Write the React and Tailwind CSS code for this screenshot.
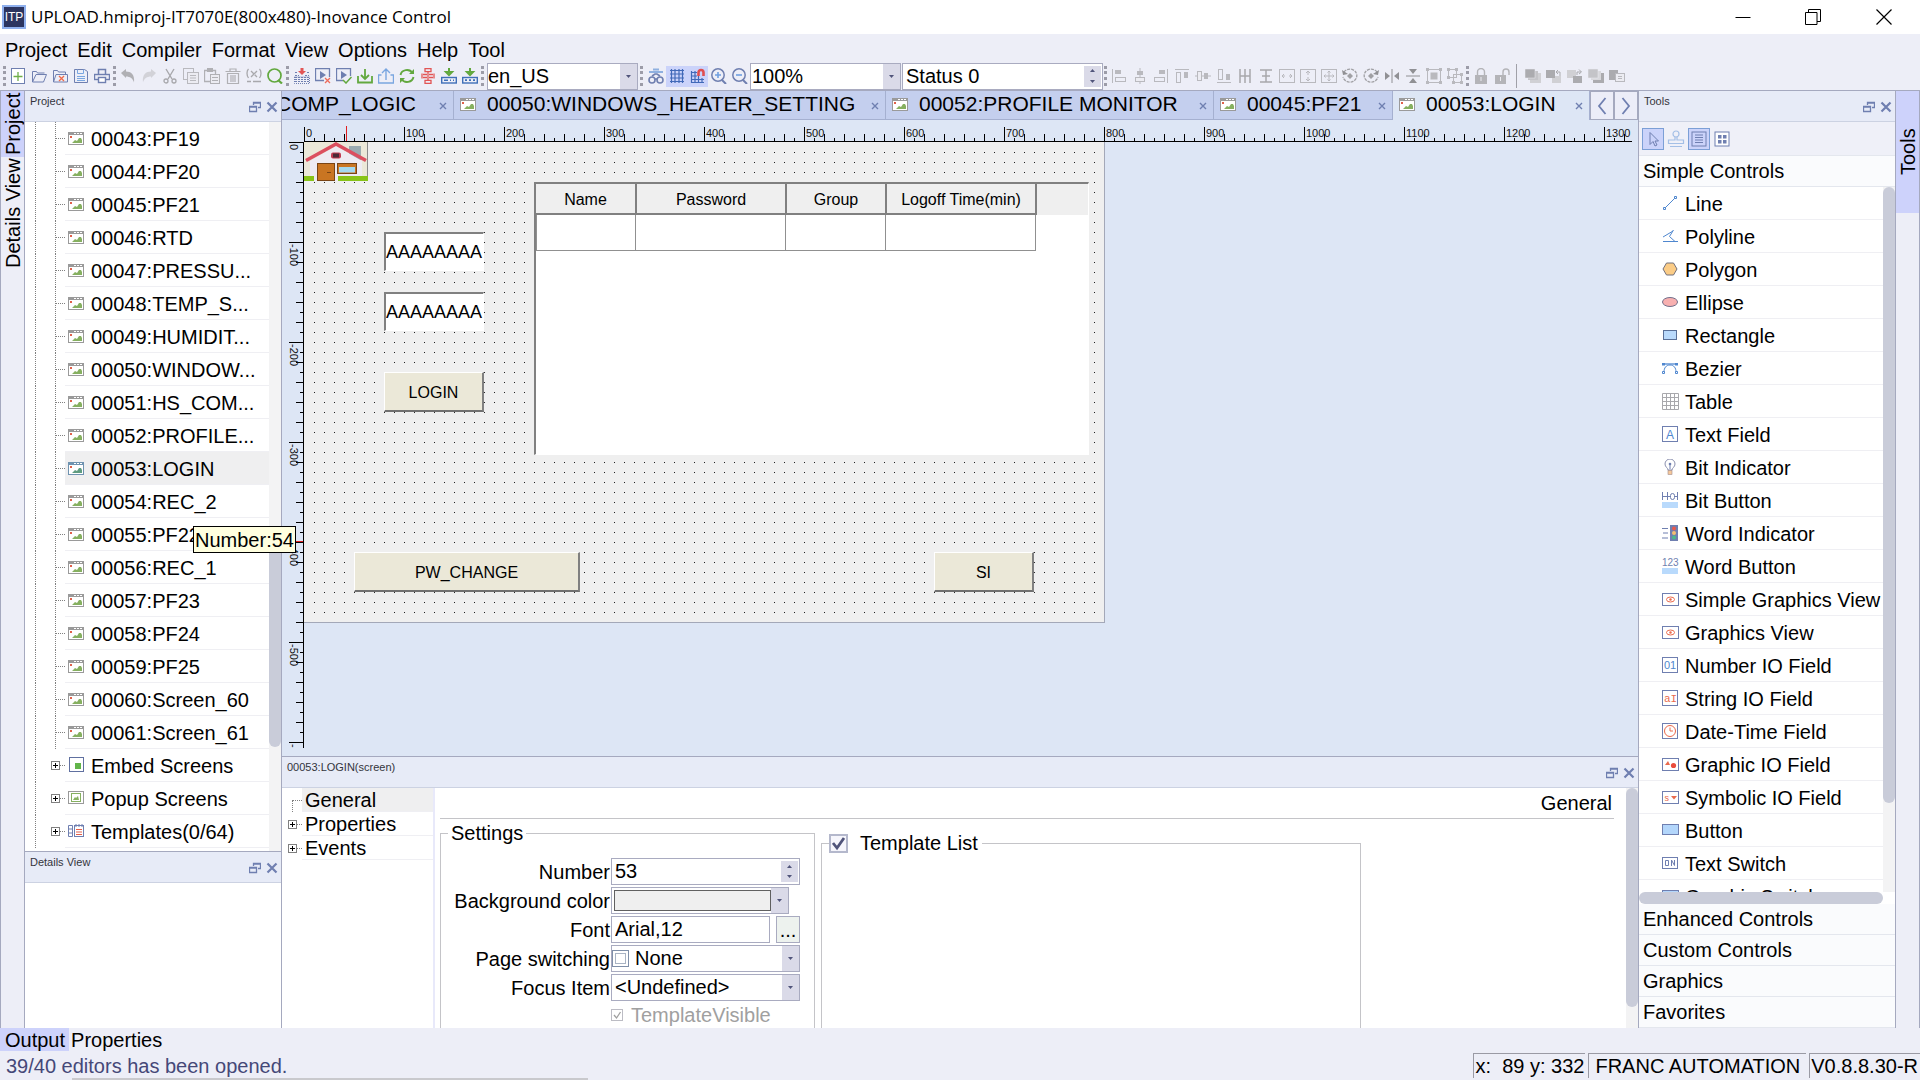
import React from "react";

/* ---------- icon helpers ---------- */

function Ico({ children, w = 16, h = 16, className = "" }) {
  return (
    <svg width={w} height={h} viewBox={`0 0 ${w} ${h}`} fill="none" className={`shrink-0 ${className}`} aria-hidden="true">
      {children}
    </svg>
  );
}

const P = "#6f7fb0";
const G = "#b9b9be";

const ScreenIcon = ({ active }) => (
  <Ico w={16} h={13}>
    <rect x="0.5" y="0.5" width="15" height="12" fill="#fff" stroke={active ? "#6f93b0" : "#9a9a9a"} />
    <rect x="0" y="0" width="16" height="3" fill={active ? "#6f93b0" : "#9a9a9a"} />
    <path d="M6 1.5h2M9 1.5h2M12 1.5h2" stroke="#fff" />
    <rect x="2" y="4" width="2" height="2" fill="#e0604a" />
    <path d="M4 11l3-3 2 1 2-3h2l1 2v3z" fill={active ? "#5f9c80" : "#86b060"} />
  </Ico>
);

const EmbedIcon = () => (
  <Ico w={16} h={16}>
    <rect x="1.5" y="0.5" width="14" height="14" fill="#fff" stroke="#6070a0" />
    <rect x="7" y="6" width="6" height="6" fill="#62b54a" />
  </Ico>
);
const PopupIcon = () => (
  <Ico w={16} h={14}>
    <rect x="0.5" y="0.5" width="15" height="12" stroke="#9a9a9a" />
    <rect x="3.5" y="2.5" width="9" height="8" stroke="#86b060" />
    <path d="M5 9l2-3 1 1 2-2 1 4z" fill="#86b060" />
  </Ico>
);
const TemplatesIcon = () => (
  <Ico w={16} h={14}>
    <path d="M0.500 1.500h4v11h-4zM0.500 5h4M0.500 9h4" stroke={P} />
    <rect x="6.500" y="1.500" width="9" height="11" stroke={P} />
    <path d="M8 0v3M11 0v3M14 0v3" stroke={P} />
    <path d="M8 5.500h6M8 8h6M8 10.500h6" stroke="#e5604a" strokeWidth="1.200" />
  </Ico>
);

/* ---------- main toolbar icons ---------- */

const fileIcons = [
  ["New", <Ico key="i"><rect x="1.5" y="0.5" width="13" height="15" fill="#fff" stroke={P} /><path d="M8 4v9M3.500 8.500h9" stroke="#6fae4a" strokeWidth="1.300" /></Ico>],
  ["Open", <Ico key="i"><path d="M1.500 14V3.500h4l1 1.500h7M1.500 14L5 6.500h10.500L12.500 14z" stroke={P} /></Ico>],
  ["Close", <Ico key="i"><path d="M1.500 14V2.500h4l1 1.500h7v2M1.500 14L4 6.500h11.500V14z" stroke={P} /><path d="M7 8l5 5M12 8l-5 5" stroke="#ee6a4a" strokeWidth="1.300" /></Ico>],
  ["Save", <Ico key="i"><path d="M1.500 1.500h10l3 2v11h-13z" stroke={P} /><path d="M4.500 1.500v4h6v-4M4 8.500h8M4 10.500h8M4 12.500h8" stroke="#7aa6e0" /></Ico>],
  ["Print", <Ico key="i"><path d="M4.500 6V1.500h7V6" stroke={P} strokeWidth="1.500" /><rect x="0.500" y="6.500" width="15" height="5" stroke={P} strokeWidth="1.400" /><rect x="4.500" y="9.500" width="7" height="5" fill="#fff" stroke={P} strokeWidth="1.400" /></Ico>],
];
const editIcons = [
  ["Undo", <Ico key="i"><path d="M1 5l5-4v2.500c5 0 9 3 8 11-1-4-4-6-8-6V10z" fill="#b0b0b4" /></Ico>],
  ["Redo", <Ico key="i"><path d="M15 5l-5-4v2.500c-5 0-9 3-8 11 1-4 4-6 8-6V10z" fill="#d2d2d8" /></Ico>],
  ["Cut", <Ico key="i"><path d="M4 1l6 10M12 1L6 11" stroke="#a8a8ac" strokeWidth="1.400" /><circle cx="4" cy="13" r="2" stroke="#a8a8ac" strokeWidth="1.300" /><circle cx="12" cy="13" r="2" stroke="#a8a8ac" strokeWidth="1.300" /></Ico>],
  ["Copy", <Ico key="i"><rect x="0.500" y="0.500" width="10" height="11" stroke={G} /><rect x="4.500" y="4.500" width="11" height="11" fill="#ececf2" stroke={G} /><path d="M7 7.500h6M7 10h6M7 12.500h6" stroke={G} /></Ico>],
  ["Paste", <Ico key="i"><path d="M0.500 2.500h11v11h-11z" stroke="#b0b0b4" strokeWidth="1.300" /><rect x="3" y="0" width="6" height="4" fill="#b0b0b4" /><rect x="6.500" y="6.500" width="9" height="9" fill="#ececf2" stroke="#b0b0b4" /><path d="M8 9.500h6M8 12.500h6" stroke="#b0b0b4" /></Ico>],
  ["Delete", <Ico key="i"><path d="M0.500 3.500h15M5 3V1h6v2M2.500 5.500h11v10h-11zM6 7v7M8 7v7M10 7v7" stroke="#b0b0b4" strokeWidth="1.200" /></Ico>],
  ["Variable", <Ico key="i"><path d="M2.500 1C.5 3 .5 7 2.500 10M13.500 1c2 2 2 6 0 9M5 3l6 6M11 3L5 9M1 13.500h4M7 13.500h8" stroke="#a8a8ac" strokeWidth="1.300" /></Ico>],
  ["Find", <Ico key="i"><circle cx="7.500" cy="7.500" r="6.500" stroke="#62a83e" strokeWidth="1.700" /><path d="M11 12l4 3.500" stroke="#62a83e" strokeWidth="2.200" /></Ico>],
];
const buildIcons = [
  ["Compile", <Ico key="i"><path d="M8 0v3" stroke="#e25555" strokeWidth="3" /><path d="M4 3h8L8 7z" fill="#e25555" /><path d="M1 4.500h2M13 4.500h2M1 7.500h4M11 7.500h4M1 9.500h14M1 11.500h14M1 13.500h14" stroke={P} strokeDasharray="2 1" /><rect x="0.500" y="9" width="15" height="6.500" stroke={P} strokeDasharray="1 1" /></Ico>],
  ["Stop simulation", <Ico key="i"><path d="M9 12.500H0.500v-12h14V9" stroke={P} strokeWidth="1.300" /><path d="M5 3l6 4-6 4z" fill={P} /><path d="M10 10l5 5M15 10l-5 5" stroke="#ee6a5a" strokeWidth="1.300" /></Ico>],
  ["Start simulation", <Ico key="i"><path d="M7 12.500H0.500v-12h14V8" stroke={P} strokeWidth="1.300" /><path d="M5 3l6 4-6 4z" fill={P} /><path d="M7 12l3 3 5.500-6" stroke="#62a83e" strokeWidth="1.500" /></Ico>],
  ["Download", <Ico key="i"><path d="M1 8v6.500h14V8M8 1v9M4 7l4 4 4-4" stroke="#62a83e" strokeWidth="1.800" /></Ico>],
  ["Upload", <Ico key="i"><path d="M3.500 7H0.500v8h15V7h-3M8 12V2M4 5l4-4 4 4" stroke="#7aa6e0" strokeWidth="1.400" /></Ico>],
  ["Refresh", <Ico key="i"><path d="M1.500 7a6.500 6 0 0 1 12-2M14.500 9a6.500 6 0 0 1-12 2" stroke="#62a83e" strokeWidth="1.900" /><path d="M15 1v5h-5zM1 15v-5h5z" fill="#62a83e" /></Ico>],
  ["Disconnect", <Ico key="i"><path d="M5 0.700h6v3H5zM3 6.500h4M9 6.500h4M3 9.500h4M9 9.500h4M5 12.300h6v3H5zM8 4v8M2 5.500v5M14 5.500v5" stroke="#e25555" strokeWidth="1.300" /></Ico>],
  ["Download to device", <Ico key="i"><path d="M8 0v5M5 4l3 3 3-3z" stroke="#62a83e" strokeWidth="2" /><rect x="0.700" y="9.500" width="14.600" height="5.500" stroke="#3f6fb8" strokeWidth="1.400" /><path d="M3 12.200h4M9 12.200h1M12 12.200h1" stroke="#3f6fb8" strokeWidth="1.400" /></Ico>],
  ["Download data", <Ico key="i"><path d="M8 0v5M5 4l3 3 3-3z" stroke="#62a83e" strokeWidth="2" /><rect x="0.700" y="9.500" width="14.600" height="5.500" stroke="#3f6fb8" strokeWidth="1.400" /><path d="M3 12.200h2M7 12.200h2M11 12.200h2" stroke="#3f6fb8" strokeWidth="1.800" /></Ico>],
];
const viewIcons = [
  ["Cross reference", <Ico key="i"><path d="M1 4h14M5 1.500h6" stroke="#8fb0e0" strokeWidth="2" /><circle cx="4" cy="12" r="3" stroke={P} strokeWidth="1.600" /><circle cx="12" cy="12" r="3" stroke={P} strokeWidth="1.600" /><path d="M4 8l3-2h2l3 2M7 11h2" stroke={P} strokeWidth="1.600" /></Ico>, false],
  ["Show grid", <Ico key="i"><path d="M2.500 1v14M6 1v14M10 1v14M13.500 1v14M1 2.500h14M1 6h14M1 10h14M1 13.500h14" stroke="#4169b8" strokeWidth="1.200" /></Ico>, true],
  ["Snap to grid", <Ico key="i"><path d="M1.500 3v12M5 3v12M8.500 8v7M12 10v5M1 4.500h6M1 8h6M1 11.500h13M1 14.500h13" stroke="#4169b8" strokeWidth="1.200" /><path d="M8.500 8V4.500a2.500 2.500 0 0 1 5 0V8" stroke="#e04f50" strokeWidth="2.600" /></Ico>, true],
  ["Zoom in", <Ico key="i"><circle cx="7" cy="7" r="6.200" stroke={P} strokeWidth="1.500" /><path d="M11 12l4 4" stroke={P} strokeWidth="2" /><path d="M4 7h6M7 4v6" stroke="#6f9fe0" strokeWidth="1.600" /></Ico>, false],
  ["Zoom out", <Ico key="i"><circle cx="7" cy="7" r="6.200" stroke={P} strokeWidth="1.500" /><path d="M11 12l4 4" stroke={P} strokeWidth="2" /><path d="M4 7h6" stroke="#6f9fe0" strokeWidth="1.600" /></Ico>, false],
];
const alignIcons = [
  ["Align left", <Ico key="i"><path d="M1.500 1v14" stroke={G} /><rect x="4" y="2" width="6" height="4" fill={G} /><rect x="4.500" y="9.500" width="10" height="4" stroke={G} /></Ico>],
  ["Align center", <Ico key="i"><path d="M8 0v16" stroke={G} /><rect x="5" y="3" width="6" height="4" fill={G} /><rect x="3.500" y="9.500" width="9" height="4" fill="#ececf2" stroke={G} /></Ico>],
  ["Align right", <Ico key="i"><path d="M14.500 1v14" stroke={G} /><rect x="6" y="2" width="6" height="4" fill={G} /><rect x="1.500" y="9.500" width="10" height="4" stroke={G} /></Ico>],
  ["Align top", <Ico key="i"><path d="M1 1.500h14" stroke={G} /><rect x="10" y="4" width="4" height="6" fill={G} /><rect x="2.500" y="4.500" width="4" height="10" stroke={G} /></Ico>],
  ["Align middle", <Ico key="i"><path d="M0 8h16" stroke={G} /><rect x="9" y="5" width="4" height="6" fill={G} /><rect x="2.500" y="3.500" width="4" height="9" fill="#ececf2" stroke={G} /></Ico>],
  ["Align bottom", <Ico key="i"><path d="M1 14.500h14" stroke={G} /><rect x="10" y="6" width="4" height="6" fill={G} /><rect x="2.500" y="1.500" width="4" height="10" stroke={G} /></Ico>],
  ["Space horizontally", <Ico key="i"><path d="M3 1v14M8 1v14M13 1v14M3 8h10" stroke="#a8a8ac" strokeWidth="1.500" /></Ico>],
  ["Space vertically", <Ico key="i"><path d="M2 2h12M4 8h8M2 14h12M8 2v12" stroke="#a8a8ac" strokeWidth="1.500" /></Ico>],
  ["Same width", <Ico key="i"><rect x="0.500" y="1.500" width="15" height="13" stroke={G} /><path d="M3 8h3M10 8h3" stroke={G} /><path d="M5 6L3 8l2 2M11 6l2 2-2 2" stroke={G} /></Ico>],
  ["Same height", <Ico key="i"><rect x="0.500" y="1.500" width="15" height="13" stroke={G} /><path d="M8 4v3M8 9v3M6 5l2-2 2 2M6 11l2 2 2-2" stroke={G} /></Ico>],
  ["Same size", <Ico key="i"><rect x="0.500" y="1.500" width="15" height="13" stroke={G} /><path d="M8 3v10M3 8h10M6.500 4.500L8 3l1.500 1.500M6.500 11.500L8 13l1.500-1.500M4.500 6.500L3 8l1.500 1.500M11.500 6.500L13 8l-1.500 1.500" stroke={G} /></Ico>],
  ["Rotate left", <Ico key="i"><path d="M2 4a7 6.500 0 1 1-1 5" stroke="#a0a0a4" strokeDasharray="3 1" strokeWidth="1.300" /><path d="M0 2l1 5 5-1z" fill="#909094" /><path d="M8 5l3 3-3 3-3-3z" fill="#a0a0a4" /></Ico>],
  ["Rotate right", <Ico key="i"><path d="M14 4a7 6.500 0 1 0 1 5" stroke="#a0a0a4" strokeDasharray="3 1" strokeWidth="1.300" /><path d="M16 2l-1 5-5-1z" fill="#909094" /><path d="M8 5l3 3-3 3-3-3z" fill="#a0a0a4" /></Ico>],
  ["Flip horizontal", <Ico key="i"><path d="M8 1v14" stroke="#909094" /><path d="M1 4l5 4-5 4zM15 4l-5 4 5 4z" fill="#909094" /></Ico>],
  ["Flip vertical", <Ico key="i"><path d="M1 8h14" stroke="#909094" /><path d="M4 1l4 5 4-5zM4 15l4-5 4 5z" fill="#909094" /></Ico>],
  ["Group", <Ico key="i"><rect x="1.500" y="1.500" width="13" height="13" stroke={G} /><rect x="4.500" y="4.500" width="7" height="7" fill={G} /><path d="M0 0h3v3H0zM13 0h3v3h-3zM0 13h3v3H0zM13 13h3v3h-3z" fill={G} /></Ico>],
  ["Ungroup", <Ico key="i"><rect x="1.500" y="1.500" width="8" height="8" stroke={G} /><rect x="6.500" y="6.500" width="8" height="8" stroke={G} /><path d="M0 0h3v3H0zM8 0h3v3H8zM0 8h3v3H0zM13 5h3v3h-3zM5 13h3v3H5zM13 13h3v3h-3z" fill={G} /></Ico>],
];
const lockIcons = [
  ["Lock", <Ico key="i"><rect x="2" y="7" width="12" height="9" fill="#b4b4b8" /><path d="M4.500 7V4a3.500 3.500 0 0 1 7 0v3" stroke="#b4b4b8" strokeWidth="1.400" /><path d="M8 9v4" stroke="#ececf2" /></Ico>],
  ["Unlock", <Ico key="i"><rect x="1" y="7" width="11" height="9" fill="#b4b4b8" /><path d="M9 7V4a3 3 0 0 1 6 0v3" stroke="#b4b4b8" strokeWidth="1.400" /><path d="M6.500 9v4" stroke="#ececf2" /></Ico>],
];
const orderIcons = [
  ["Bring to front", <Ico key="i"><rect x="5" y="5" width="11" height="10" fill="#d0d0d4" /><rect x="3" y="3" width="10" height="9" fill="#c4c4c8" /><rect x="0" y="1" width="10" height="9" fill="#ababaf" stroke="#ececf2" strokeWidth="0.500" /></Ico>],
  ["Bring forward", <Ico key="i"><rect x="6" y="8" width="9" height="7" fill="#d0d0d4" /><rect x="0" y="2" width="9" height="8" fill="#ababaf" /><path d="M14 8V4h-4M12 2l-2 2 2 2" stroke="#ababaf" /></Ico>],
  ["Send backward", <Ico key="i"><rect x="0" y="2" width="9" height="8" fill="#d0d0d4" /><rect x="6" y="8" width="9" height="7" fill="#ababaf" /><path d="M10 7V4h4M12 1.500L14.500 4 12 6" stroke="#ababaf" /></Ico>],
  ["Send to back", <Ico key="i"><rect x="5" y="5" width="11" height="10" fill="#ababaf" /><rect x="3" y="3" width="10" height="9" fill="#d8d8dc" /><rect x="0" y="1" width="10" height="9" fill="#c4c4c8" stroke="#ececf2" strokeWidth="0.500" /></Ico>],
  ["Order", <Ico key="i"><rect x="0" y="2" width="9" height="10" fill="#ababaf" /><rect x="6.500" y="5.500" width="9" height="8" fill="#ececf2" stroke={G} /><path d="M9 8.500h4M9 10.500h4" stroke={G} /></Ico>],
];

/* ---------- toolbar parts ---------- */

const Grip = () => <span className="mx-px h-5 w-[3px] shrink-0 border-l-[3px] border-dotted border-[#9c9ca8]" />;

function IconRow({ items }) {
  return items.map(([name, icon, on]) => (
    <button key={name} aria-label={name} className={`flex h-[21px] w-[21px] shrink-0 items-center justify-center ${on ? "bg-[#cbd3fa]" : ""}`}>
      {icon}
    </button>
  ));
}

const DownArrow = () => (
  <span className="pointer-events-none absolute inset-y-0 right-0 flex w-[17px] items-center justify-center bg-[#dadae8]">
    <Ico w={5} h={3}><path d="M0 0h5L2.500 3z" fill="#50547a" /></Ico>
  </span>
);
const Spinner = () => (
  <span className="absolute inset-y-[2px] right-[1px] flex w-[17px] flex-col">
    <button aria-label="Increase" className="flex flex-1 items-center justify-center bg-[#dadae8]">
      <Ico w={5} h={3}><path d="M0 3h5L2.500 0z" fill="#50547a" /></Ico>
    </button>
    <button aria-label="Decrease" className="flex flex-1 items-center justify-center bg-[#dadae8]">
      <Ico w={5} h={3}><path d="M0 0h5L2.500 3z" fill="#50547a" /></Ico>
    </button>
  </span>
);

function Select({ label, id, value, className = "", pad = "pl-0" }) {
  return (
    <span className={`relative flex h-[27px] shrink-0 border border-[#a9abc0] bg-white ${className}`}>
      <select id={id} aria-label={label} defaultValue={value} className={`h-full w-full appearance-none bg-transparent pr-5 leading-[25px] outline-none ${pad}`}>
        <option>{value}</option>
      </select>
      <DownArrow />
    </span>
  );
}

/* ---------- dock header ---------- */

function DockHeader({ title }) {
  return (
    <header className="flex h-[31px] shrink-0 justify-between border-b border-[#ccd2e2] bg-[#e7ebf7] pt-1 pr-[3px] pl-[5px]">
      <h2 className="text-[11px] leading-[12px] text-[#33343c]">{title}</h2>
      <div className="flex gap-[5px] pt-[6px]">
        <button aria-label={`Float ${title}`} className="flex h-3 w-3">
          <Ico w={12} h={12}><path d="M4.500 4V1.500h7v5H9M4.500 2h7" stroke={P} strokeWidth="1.300" /><path d="M0.500 5.500h7v5h-7zM0.500 6h7" stroke={P} strokeWidth="1.300" /></Ico>
        </button>
        <button aria-label={`Close ${title}`} className="flex h-3 w-3">
          <Ico w={12} h={12}><path d="M1.500 1.500l9 9M10.500 1.500l-9 9" stroke={P} strokeWidth="2.200" /></Ico>
        </button>
      </div>
    </header>
  );
}

/* ---------- project tree ---------- */

const screens = [
  "00043:PF19", "00044:PF20", "00045:PF21", "00046:RTD", "00047:PRESSU...", "00048:TEMP_S...",
  "00049:HUMIDIT...", "00050:WINDOW...", "00051:HS_COM...", "00052:PROFILE...", "00053:LOGIN",
  "00054:REC_2", "00055:PF22", "00056:REC_1", "00057:PF23", "00058:PF24", "00059:PF25",
  "00060:Screen_60", "00061:Screen_61",
];
const folders = [
  ["Embed Screens", <EmbedIcon key="i" />],
  ["Popup Screens", <PopupIcon key="i" />],
  ["Templates(0/64)", <TemplatesIcon key="i" />],
];

const Expander = () => (
  <button aria-label="Expand" className="flex h-[9px] w-[9px] shrink-0 items-center justify-center border border-[#808080] bg-white">
    <Ico w={5} h={5}><path d="M2.500 0v5M0 2.500h5" stroke="#000" /></Ico>
  </button>
);

function TreeRow({ label, icon, expandable, selected }) {
  return (
    <li className="flex h-[33px] items-stretch">
      <span className="ml-[10px] w-4 shrink-0 border-l border-dotted border-[#808080]" />
      <span className="flex w-[14px] shrink-0 items-center">
        {expandable ? <Expander /> : <span className="ml-1 h-full w-px border-l border-dotted border-[#808080]" />}
        <span className="grow border-t border-dotted border-[#808080]" />
      </span>
      <button className={`flex flex-1 items-center gap-[7px] border-b border-[#efeff3] pl-[3px] text-left whitespace-nowrap ${selected ? "bg-[#efeff0]" : "bg-white"}`}>
        {icon}
        <span className="pt-[2px]">{label}</span>
      </button>
    </li>
  );
}

function ProjectPanel() {
  return (
    <aside className="relative flex w-[258px] shrink-0 flex-col border-r border-l border-[#a5a9bf] bg-white">
      <DockHeader title="Project" />
      <div className="flex min-h-0 flex-1 overflow-hidden">
        <ul className="flex-1">
          {screens.map((s) => (
            <TreeRow key={s} label={s} icon={<ScreenIcon active={s === "00053:LOGIN"} />} selected={s === "00053:LOGIN"} />
          ))}
          {folders.map(([s, icon]) => <TreeRow key={s} label={s} icon={icon} expandable />)}
        </ul>
        <div className="flex w-3 flex-col bg-[#f3f3f4] pt-[418px]">
          <span className="h-[207px] rounded-md bg-[#c9ccd9]" />
        </div>
      </div>
      <section className="h-[177px] shrink-0 border-t border-[#a5a9bf]">
        <DockHeader title="Details View" />
      </section>
      <div role="tooltip" className="absolute top-[435px] left-[168px] z-10 flex h-[27px] items-center border border-black bg-[#ffffdf] px-px">
        Number:54
      </div>
    </aside>
  );
}

/* ---------- editor ---------- */

const tabs = [
  ["00050:WINDOWS_HEATER_SETTING", "w-[432px]"],
  ["00052:PROFILE MONITOR", "w-[328px]"],
  ["00045:PF21", "w-[179px]"],
  ["00053:LOGIN", "w-[197px]"],
];

const TabClose = ({ name }) => (
  <button aria-label={`Close ${name}`} className="mt-1 flex h-3 w-3 items-center justify-center">
    <Ico w={8} h={8}><path d="M1 1l6 6M7 1L1 7" stroke={P} strokeWidth="1.400" /></Ico>
  </button>
);

function TabBar() {
  return (
    <div className="flex h-[29px] shrink-0 bg-[#c4cfee] text-[21px] leading-[26px]">
      <div className="flex w-[172px] min-w-0 items-start border-r border-b border-[#a5b0d0]">
        <span className="flex min-w-0 flex-1 justify-end overflow-hidden whitespace-nowrap">
          <button>00051:HS_COMP_LOGIC</button>
        </span>
        <span className="flex w-[37px] shrink-0 justify-end pt-[5px] pr-1"><TabClose name="00051" /></span>
      </div>
      {tabs.map(([name, w]) => (
        <div key={name} className={`flex shrink-0 items-start justify-between border-r border-[#a5b0d0] pr-1 pl-[6px] ${w} ${name === "00053:LOGIN" ? "bg-[#dde6f5]" : "border-b"}`}>
          <button className="flex items-center gap-[11px] whitespace-nowrap"><ScreenIcon />{name}</button>
          <span className="pt-[5px]"><TabClose name={name} /></span>
        </div>
      ))}
      <button aria-label="Previous tab" className="flex flex-1 items-center justify-center border border-[#a5a9bf] bg-[#ecedf8]">
        <Ico w={10} h={18}><path d="M8.500 1L2 9l6.500 8" stroke={P} strokeWidth="1.800" /></Ico>
      </button>
      <button aria-label="Next tab" className="flex flex-1 items-center justify-center border border-[#a5a9bf] bg-[#ecedf8]">
        <Ico w={10} h={18}><path d="M1.500 1L8 9l-6.500 8" stroke={P} strokeWidth="1.800" /></Ico>
      </button>
    </div>
  );
}

const hTicks = Array.from({ length: 133 }, (_, i) => i);
const vTicks = Array.from({ length: 61 }, (_, i) => i);

function HRuler() {
  return (
    <div className="flex h-[22px] shrink-0 pr-[6px] pl-[22px]">
      <svg className="h-full w-full overflow-hidden" aria-label="Horizontal ruler">
        {hTicks.map((i) => {
          const len = i % 10 === 0 ? 14 : i % 2 === 0 ? 7 : 3;
          return <rect key={i} x={i * 10} y={21 - len} width="1" height={len} fill="#000" />;
        })}
        {hTicks.filter((i) => i % 10 === 0).map((i) => (
          <text key={i} x={i * 10 + 2} y="17" fontSize="11" fill="#111">{i * 10}</text>
        ))}
        <rect x="0" y="21" width="100%" height="1" fill="#000" />
        <rect x="42" y="6" width="1" height="15" fill="#e02020" />
      </svg>
    </div>
  );
}

function VRuler() {
  return (
    <div className="flex w-[22px] shrink-0 pb-2">
      <svg className="h-full w-full overflow-hidden" aria-label="Vertical ruler">
        {vTicks.map((i) => {
          const len = i % 10 === 0 ? 14 : i % 2 === 0 ? 7 : 3;
          return <rect key={i} x={21 - len} y={i * 10} width={len} height="1" fill="#000" />;
        })}
        {vTicks.filter((i) => i % 10 === 0).map((i) => (
          <text key={i} transform={`translate(8 ${i * 10 + 2}) rotate(90)`} fontSize="11" fill="#111">{i ? -i * 10 : 0}</text>
        ))}
        <rect x="21" y="0" width="1" height="100%" fill="#000" />
        <rect x="14" y="399" width="7" height="1" fill="#e02020" />
      </svg>
    </div>
  );
}

const House = () => (
  <svg width="64" height="39" viewBox="0 0 64 39" className="absolute top-0 left-0" aria-label="Home">
    <rect width="64" height="39" fill="#ebe8d8" />
    <rect x="45" y="4" width="12" height="14" fill="#9aabb0" />
    <path d="M6 19L32 4l26 15v20H6z" fill="#eeebf2" />
    <path d="M2 18.500L32 2l30 16.500" fill="none" stroke="#dc4f5f" strokeWidth="3.500" />
    <rect x="27" y="10.500" width="10" height="6" rx="2" fill="#c03a50" />
    <rect x="29" y="11.500" width="6" height="4" fill="#4a2a38" />
    <rect x="0" y="34" width="10" height="5" fill="#88c418" />
    <rect x="34" y="34" width="30" height="5" fill="#88c418" />
    <rect x="13.500" y="21.500" width="17" height="17" fill="#c97522" stroke="#7a4414" />
    <path d="M23 30.500h4" stroke="#7a4414" />
    <rect x="33.500" y="21.500" width="19" height="10" fill="#c97522" stroke="#7a4414" />
    <rect x="35" y="25" width="16" height="5.500" fill="#a4d8ee" />
    <path d="M63.500 0v34" stroke="#8a8a8a" />
  </svg>
);

const bevelOut = "border-t border-l border-r-2 border-b-2 border-t-white border-l-white border-r-[#808080] border-b-[#707070] bg-[#ebe8d8] pt-[2px]";
const bevelIn = "border-t-2 border-l-2 border-r border-b border-t-[#808080] border-l-[#808080] border-r-white border-b-white bg-white";
const headCell = "border-r-2 border-b-2 border-[#808080] pt-[2px] font-normal";

function Canvas() {
  return (
    <div className="relative h-[481px] w-[801px] shrink-0 border-r border-b border-[#a3a8b8] bg-[#efefef] text-[16px]">
      <svg className="absolute inset-[5px] h-[470px] w-[790px]" aria-hidden="true">
        <defs>
          <pattern id="dots" width="10" height="10" patternUnits="userSpaceOnUse">
            <rect x="5" y="5" width="1" height="1" fill="#222" />
          </pattern>
        </defs>
        <rect width="790" height="470" fill="url(#dots)" />
      </svg>
      <House />
      <input aria-label="User name" readOnly value="AAAAAAAA" className={`absolute top-[90px] left-[80px] h-[39px] w-[100px] text-[18px] outline-none ${bevelIn}`} />
      <input aria-label="User password" readOnly value="AAAAAAAA" className={`absolute top-[150px] left-[80px] h-[39px] w-[100px] text-[18px] outline-none ${bevelIn}`} />
      <button className={`absolute top-[230px] left-[80px] h-[40px] w-[100px] ${bevelOut}`}>LOGIN</button>
      <button className={`absolute top-[410px] left-[50px] h-[40px] w-[226px] ${bevelOut}`}>PW_CHANGE</button>
      <button className={`absolute top-[410px] left-[630px] h-[40px] w-[100px] ${bevelOut}`}>SI</button>
      <div className={`absolute top-[40px] left-[230px] h-[273px] w-[555px] overflow-hidden ${bevelIn}`}>
        <div className="bg-[#efefef]">
          <table className="w-[500px] table-fixed border-collapse text-center">
            <thead>
              <tr className="h-[30px]">
                <th className={`w-[100px] ${headCell}`}>Name</th>
                <th className={`w-[150px] ${headCell}`}>Password</th>
                <th className={`w-[100px] ${headCell}`}>Group</th>
                <th className={`w-[150px] ${headCell}`}>Logoff Time(min)</th>
              </tr>
            </thead>
          </table>
        </div>
        <div className="flex h-[36px] w-[500px] border-b border-l border-[#909090]">
          <span className="w-[99px] border-r border-[#909090]" />
          <span className="w-[150px] border-r border-[#909090]" />
          <span className="w-[100px] border-r border-[#909090]" />
          <span className="flex-1 border-r border-[#909090]" />
        </div>
      </div>
    </div>
  );
}

/* ---------- property dock ---------- */

const fieldBox = "border border-[#a9abc0] bg-white";

function FormRow({ id, label, children }) {
  return (
    <div className="flex h-[27px] items-center">
      <label htmlFor={id} className="w-[170px] shrink-0 pr-px text-right whitespace-nowrap">{label}</label>
      {children}
    </div>
  );
}

function PropertyDock() {
  return (
    <section className="flex h-[272px] shrink-0 flex-col border-t border-[#a5a9bf] bg-white">
      <DockHeader title="00053:LOGIN(screen)" />
      <div className="flex min-h-0 flex-1 overflow-hidden">
        <ul className="w-[151px] shrink-0">
          {["General", "Properties", "Events"].map((s, i) => (
            <li key={s} className="flex h-6 items-center pl-[6px]">
              <span className="flex w-[14px] items-center">
                {i ? <Expander /> : <span className="ml-1 h-3 translate-y-1.5 border-l border-dotted border-[#808080]" />}
                <span className="grow border-t border-dotted border-[#808080]" />
              </span>
              <button className={`h-6 flex-1 border-b border-[#efeff3] pl-[3px] text-left ${i ? "" : "bg-[#efeff0]"}`}>{s}</button>
            </li>
          ))}
        </ul>
        <div className="w-[2px] shrink-0 bg-[#e8e9fa]" />
        <div className="flex-1 pr-3 pl-[5px]">
          <h3 className="flex h-[31px] items-center justify-end border-b border-[#c4c4c8] pr-[2px]">General</h3>
          <div className="flex items-start gap-[6px] pt-1">
            <fieldset className="h-[240px] w-[375px] min-w-0 border border-[#c4c4c8]">
              <legend className="ml-[7px] px-[3px] leading-5">Settings</legend>
              <div className="flex flex-col gap-[2px] pt-[15px]">
                <FormRow id="num" label="Number">
                  <span className={`relative h-full w-[189px] ${fieldBox}`}>
                    <input id="num" defaultValue="53" className="h-full w-full pl-[3px] outline-none" />
                    <Spinner />
                  </span>
                </FormRow>
                <FormRow id="bg" label="Background color">
                  <button id="bg" className={`relative flex h-full w-[178px] p-[2px] pr-[17px] ${fieldBox}`}>
                    <span className="h-full w-full border border-[#606060] bg-[#efefef]" />
                    <DownArrow />
                  </button>
                </FormRow>
                <FormRow id="font" label="Font">
                  <input id="font" defaultValue="Arial,12" className={`h-full w-[159px] pl-[3px] outline-none ${fieldBox}`} />
                  <button aria-label="Choose font" className="ml-[6px] h-full w-6 border border-[#a9abc0] bg-[#edf2ee]">...</button>
                </FormRow>
                <FormRow id="page" label="Page switching">
                  <span className="relative">
                    <Select id="page" label="Page switching" value="None" className="w-[189px]" pad="pl-[23px]" />
                    <span className="pointer-events-none absolute top-[5px] left-px h-[17px] w-[17px] border border-[#7f8fa8] p-[2px]">
                      <span className="block h-full w-full border border-[#a9b4c4]" />
                    </span>
                  </span>
                </FormRow>
                <FormRow id="focus" label="Focus Item">
                  <Select id="focus" label="Focus Item" value="<Undefined>" className="w-[189px]" pad="pl-[3px]" />
                </FormRow>
                <label className="ml-[170px] flex h-[23px] items-center gap-2 text-[#a0a0a0]">
                  <span className="relative flex h-3 w-3">
                    <input type="checkbox" defaultChecked disabled className="h-3 w-3 appearance-none border border-[#bcbcc4]" />
                    <Ico w={12} h={12} className="pointer-events-none absolute inset-0"><path d="M3 6l2.500 3L9.500 3" stroke="#a0a0a0" strokeWidth="1.300" /></Ico>
                  </span>
                  TemplateVisible
                </label>
              </div>
            </fieldset>
            <fieldset className="mt-[10px] h-[240px] w-[540px] min-w-0 border border-[#c4c4c8]">
              <legend className="ml-[7px]">
                <label className="flex items-center gap-3 pr-1 leading-5">
                  <span className="relative flex h-[19px] w-[19px]">
                    <input type="checkbox" defaultChecked className="h-[19px] w-[19px] appearance-none border-2 border-[#b4b8cc] bg-[#f6f6fc]" />
                    <Ico w={19} h={19} className="pointer-events-none absolute inset-0"><path d="M4 9l4 5 7-10" stroke="#50547a" strokeWidth="2.800" /></Ico>
                  </span>
                  Template List
                </label>
              </legend>
            </fieldset>
          </div>
        </div>
        <div className="w-3 bg-[#f3f3f4]">
          <div className="h-[219px] rounded-md bg-[#c9ccd9]" />
        </div>
      </div>
    </section>
  );
}

/* ---------- tool box ---------- */

const B = "#4f87cf";
const R = "#ea6a4c";
const Box = ({ children }) => <Ico><rect x="0.500" y="0.500" width="15" height="15" fill="#fff" stroke={P} />{children}</Ico>;
const Wide = ({ children, fill = "#fff" }) => <Ico w={17} h={13}><rect x="0.500" y="0.500" width="16" height="12" fill={fill} stroke={P} />{children}</Ico>;

const tools = [
  ["Line", <Ico key="i"><path d="M3 13L13 3" stroke={B} /><path d="M1.500 12.500h2v2h-2zM12.500 1.500h2v2h-2z" stroke={B} fill="#fff" /></Ico>],
  ["Polyline", <Ico key="i"><path d="M1 9l10-6M11.500 2L7.500 8.500l5.500 5M1 13.500h15" stroke={B} /></Ico>],
  ["Polygon", <Ico key="i"><path d="M4.500 2h7l3.500 6-3.500 6h-7L1 8z" fill="#fbcc86" stroke="#71707c" /></Ico>],
  ["Ellipse", <Ico key="i"><ellipse cx="8" cy="8" rx="7.500" ry="4.500" fill="#f8b0b0" stroke="#71708c" /></Ico>],
  ["Rectangle", <Ico key="i"><rect x="1.500" y="3.500" width="13" height="9" fill="#b9dafc" stroke="#5a7098" /></Ico>],
  ["Bezier", <Ico key="i"><path d="M1 4h14" stroke={B} strokeWidth="1.300" /><path d="M2 12c0-4 2-7 6-7s6 3 6 7" stroke={B} /><path d="M0 3h3v2.500H0zM13 3h3v2.500h-3z" fill={B} /><path d="M0.500 11.500h2v2h-2zM13.500 11.500h2v2h-2z" stroke={B} fill="#fff" /></Ico>],
  ["Table", <Ico key="i" w={17} h={17}><path d="M0.500 0.500h16v16h-16zM4.500 0v17M8.500 0v17M12.500 0v17M0 4.500h17M0 8.500h17M0 12.500h17" stroke="#a8a8ac" /></Ico>],
  ["Text Field", <Box key="i"><text x="4" y="12.500" fontSize="12" fill={B}>A</text></Box>],
  ["Bit Indicator", <Ico key="i"><path d="M6 11c0-2-3-3-3-6a5 5 0 0 1 10 0c0 3-3 4-3 6z" stroke="#8a8fae" /><path d="M8 5v5" stroke={P} /><circle cx="8" cy="5" r="1.300" fill={P} /><rect x="6" y="11.500" width="4" height="4" fill="#f6c89a" stroke="#a08a8a" strokeWidth="0.600" /></Ico>],
  ["Bit Button", <Ico key="i"><path d="M0.500 0v8M5.500 0v8M0 4.500h6M5 4.500h3M15.500 0v8M13 4.500h3" stroke={P} /><rect x="8.500" y="1.500" width="4" height="6" rx="2" stroke={P} /><rect x="0" y="10" width="16" height="6" fill="#b9dafc" /></Ico>],
  ["Word Indicator", <Ico key="i"><path d="M0 3.500h6M1 8h5M0 13h6" stroke={P} /><rect x="8" y="0" width="8" height="16" fill={P} /><circle cx="12" cy="3.500" r="2" fill="#ea5a4c" /><circle cx="12" cy="8" r="2" fill="#f6c070" /><circle cx="12" cy="12.500" r="2" fill="#4cba8a" /></Ico>],
  ["Word Button", <Ico key="i" w={17}><text x="0" y="8" fontSize="10" fill={P}>123</text><rect x="0" y="10" width="16" height="6" fill="#b9dafc" /></Ico>],
  ["Simple Graphics View", <Wide key="i"><ellipse cx="8.500" cy="6.500" rx="4" ry="2.500" stroke={R} /><circle cx="8.500" cy="6.500" r="1.200" fill={R} /></Wide>],
  ["Graphics View", <Wide key="i"><ellipse cx="8.500" cy="6.500" rx="4" ry="2.500" stroke={R} /><circle cx="8.500" cy="6.500" r="1.200" fill={R} /></Wide>],
  ["Number IO Field", <Box key="i"><text x="2" y="12" fontSize="11" fill={B}>01</text></Box>],
  ["String IO Field", <Box key="i"><text x="2" y="12" fontSize="11" fill={R} fontFamily="Liberation Mono">aI</text></Box>],
  ["Date-Time Field", <Box key="i"><circle cx="8" cy="8" r="5.500" stroke={R} /><path d="M8 4.500V8h3" stroke={R} /></Box>],
  ["Graphic IO Field", <Wide key="i"><path d="M3 7l3-4 2 4z" fill={R} /><circle cx="11.500" cy="7.500" r="2.600" fill="#ea4c3c" /></Wide>],
  ["Symbolic IO Field", <Wide key="i"><text x="2.500" y="10" fontSize="9" fill={R}>s</text><path d="M9 5h6l-3 3.500z" fill={R} /></Wide>],
  ["Button", <Ico key="i" w={17} h={12}><rect x="0.500" y="0.500" width="16" height="10" fill="#b3d6fb" stroke={P} /></Ico>],
  ["Text Switch", <Ico key="i" w={16} h={13}><rect x="0.500" y="0.500" width="15" height="11" fill="#fff" stroke={P} /><path d="M3.500 3.500h3v5h-3zM9.500 9V3l3 5.500V3" stroke={P} /></Ico>],
  ["Graphic Switch", <Ico key="i" w={17} h={12}><rect x="0.500" y="0.500" width="16" height="10" fill="#b3d6fb" stroke={P} /></Ico>],
];

function ToolsPanel() {
  return (
    <aside className="flex w-[258px] shrink-0 flex-col border-r border-l border-[#a5a9bf] bg-white">
      <DockHeader title="Tools" />
      <div className="flex h-[34px] shrink-0 items-center gap-px border-b border-[#e4e7ee] bg-[#eff0f8] pl-[3px]">
        <button aria-label="Select" className="flex h-[22px] w-[22px] items-center justify-center border border-[#7c9fd6] bg-[#cbd3fa]">
          <Ico><path d="M5 1.500v12l3-3 2 4.500 2-1-2-4h3.500z" stroke={P} /></Ico>
        </button>
        <button aria-label="Stamp" className="flex h-[22px] w-[22px] items-center justify-center">
          <Ico w={18} h={18}><circle cx="9" cy="4" r="3" stroke="#a4bfe6" strokeWidth="1.200" /><path d="M8 7v3H1.500v3.500h15V10H10V7M3 16.500h12" stroke="#a4bfe6" strokeWidth="1.200" /></Ico>
        </button>
        <button aria-label="List view" className="flex h-[22px] w-[22px] items-center justify-center border border-[#7c9fd6] bg-[#cbd3fa]">
          <Ico><rect x="1" y="1" width="14" height="14" stroke={P} /><path d="M4 4h8M4 6.500h8M4 9h8M4 11.500h8" stroke={P} /></Ico>
        </button>
        <button aria-label="Grid view" className="flex h-[22px] w-[22px] items-center justify-center">
          <Ico><rect x="1" y="1" width="14" height="14" fill="#fff" stroke={P} /><path d="M4 4h3.500v3.500H4zM9 4h3.500v3.500H9zM4 9h3.500v3.500H4zM9 9h3.500v3.500H9z" fill={P} /></Ico>
        </button>
      </div>
      <button className="h-[31px] shrink-0 border-b border-[#e4e7ee] bg-[#fafbfd] pl-1 text-left">Simple Controls</button>
      <div className="flex min-h-0 flex-1">
        <ul className="flex-1 overflow-hidden">
          {tools.map(([name, icon]) => (
            <li key={name}>
              <button className="flex h-[33px] w-full items-center gap-[6px] border-b border-[#efeff3] pl-[23px] text-left whitespace-nowrap">
                <span className="flex w-[17px] justify-start">{icon}</span><span className="pt-[2px]">{name}</span>
              </button>
            </li>
          ))}
        </ul>
        <div className="w-3 shrink-0 bg-[#f3f3f4]">
          <div className="h-[616px] rounded-md bg-[#c9ccd9]" />
        </div>
      </div>
      <div className="h-3 shrink-0 pr-3"><div className="h-full rounded-md bg-[#c9ccd9]" /></div>
      {["Enhanced Controls", "Custom Controls", "Graphics", "Favorites"].map((s) => (
        <button key={s} className="h-[31px] shrink-0 border-b border-[#e4e7ee] bg-[#fafbfd] pl-1 text-left">{s}</button>
      ))}
    </aside>
  );
}

/* ---------- page ---------- */

export default function App() {
  return (
    <div className="flex h-screen w-full flex-col overflow-hidden bg-[#edeef7] font-['Liberation_Sans',Arial,sans-serif] text-[20px] leading-none text-black">
      <header className="flex h-[34px] shrink-0 items-center justify-between bg-white">
        <div className="flex items-center gap-[5px] pl-[2px]">
          <span className="flex h-6 w-6 items-center justify-center border-2 border-[#8fb0ee] bg-[#2c3560] text-[12px] text-white">ITP</span>
          <h1 className="font-['Open_Sans','Noto_Sans',sans-serif] text-[17px] leading-6 whitespace-nowrap">UPLOAD.hmiproj-IT7070E(800x480)-Inovance Control</h1>
        </div>
        <div className="flex">
          <button aria-label="Minimize" className="flex h-[34px] w-[70px] items-center justify-center"><Ico><path d="M0.500 8.500h15" stroke="#000" /></Ico></button>
          <button aria-label="Restore" className="flex h-[34px] w-[70px] items-center justify-center"><Ico><path d="M0.500 3.500h11.500v12H0.500zM3.500 3.500v-3h12v12H12" stroke="#000" /></Ico></button>
          <button aria-label="Close" className="flex h-[34px] w-[72px] items-center justify-center"><Ico><path d="M0.500 0.500l15 15M15.500 0.500l-15 15" stroke="#000" strokeWidth="1.200" /></Ico></button>
        </div>
      </header>

      <nav className="flex h-[28px] shrink-0 gap-[10px] pt-[6px] pl-[5px]">
        {["Project", "Edit", "Compiler", "Format", "View", "Options", "Help", "Tool"].map((m) => (
          <button key={m} className="h-5 leading-none">{m}</button>
        ))}
      </nav>

      <div className="flex h-[29px] shrink-0 items-center border-b border-[#a5a9bf] pl-[2px]">
        <Grip />
        <IconRow items={fileIcons} />
        <Grip />
        <IconRow items={editIcons} />
        <Grip />
        <span className="w-px shrink-0" />
        <IconRow items={buildIcons} />
        <Grip />
        <Select label="Language" value="en_US" className="ml-[2px] w-[151px]" />
        <span className="w-px shrink-0" />
        <Grip />
        <span className="w-px shrink-0" />
        <IconRow items={viewIcons} />
        <Select label="Zoom" value="100%" className="w-[151px]" pad="pl-px" />
        <span className="relative ml-px flex h-[27px] w-[201px] shrink-0 border border-[#a9abc0] bg-white">
          <input aria-label="Status" defaultValue="Status 0" className="h-full w-full pl-[3px] outline-none" />
          <Spinner />
        </span>
        <Grip />
        <IconRow items={alignIcons} />
        <Grip />
        <IconRow items={lockIcons} />
        <span className="mr-[5px] ml-1 h-6 w-px bg-[#a0a0a8]" />
        <IconRow items={orderIcons} />
      </div>

      <main className="flex min-h-0 flex-1">
        <div className="flex w-6 shrink-0 flex-col items-stretch border-l border-[#a5a9bf]">
          <button className="flex h-[66px] rotate-180 items-center justify-center bg-[#cdd2fb] [writing-mode:vertical-rl]">Project</button>
          <button className="flex h-[112px] rotate-180 items-center justify-center whitespace-nowrap [writing-mode:vertical-rl]">Details View</button>
        </div>
        <ProjectPanel />
        <div className="flex min-w-0 flex-1 flex-col bg-[#dde6f5]">
          <TabBar />
          <HRuler />
          <div className="flex min-h-0 flex-1 overflow-hidden">
            <VRuler />
            <Canvas />
          </div>
          <PropertyDock />
        </div>
        <ToolsPanel />
        <div className="w-6 shrink-0 border-r border-[#a5a9bf]">
          <button className="flex h-[122px] w-full rotate-180 items-center justify-center bg-[#cdd2fb] [writing-mode:vertical-rl]">Tools</button>
        </div>
      </main>

      <div className="flex h-[23px] shrink-0 items-center">
        <button className="h-full bg-[#cdd2fb] pr-1 pl-[5px]">Output</button>
        <button className="h-full pl-[2px]">Properties</button>
      </div>

      <footer className="flex h-[29px] shrink-0 flex-col justify-between">
        <div className="flex h-[27px] items-end justify-between">
          <p className="flex h-[25px] items-center pl-[6px] text-[#454878]">39/40 editors has been opened.</p>
          <div className="flex gap-[3px] whitespace-pre">
            <span className="flex h-[25px] items-center border-t border-l border-[#9a9aa4] px-px">x:  89 y: 332</span>
            <span className="flex h-[25px] items-center border-t border-l border-[#9a9aa4] px-[6px]">FRANC AUTOMATION</span>
            <span className="flex h-[25px] items-center border-t border-l border-[#9a9aa4] pr-[2px] pl-px">V0.8.8.30-R</span>
          </div>
        </div>
        <div className="ml-[72px] h-[2px] w-[516px] bg-[#c9c9cd]" />
      </footer>
    </div>
  );
}
